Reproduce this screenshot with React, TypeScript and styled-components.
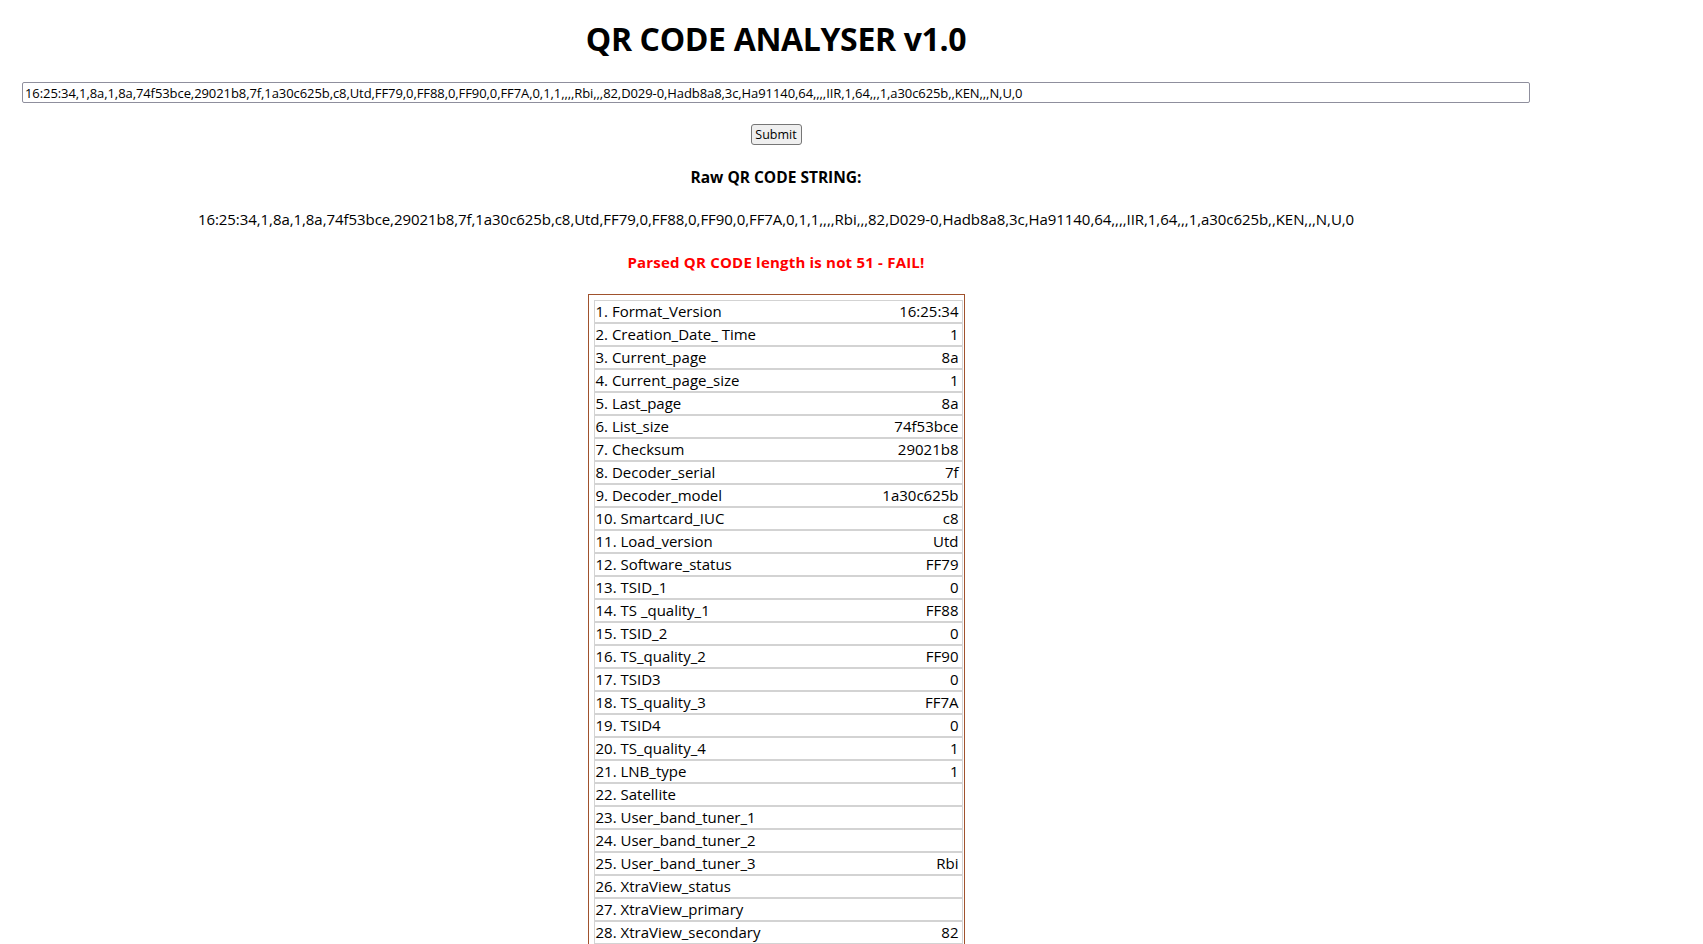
import React from 'react';
import styled, { createGlobalStyle } from 'styled-components';

const RAW =
  '16:25:34,1,8a,1,8a,74f53bce,29021b8,7f,1a30c625b,c8,Utd,FF79,0,FF88,0,FF90,0,FF7A,0,1,1,,,,Rbi,,,82,D029-0,Hadb8a8,3c,Ha91140,64,,,,IIR,1,64,,,1,a30c625b,,KEN,,,N,U,0';

const FIELDS = [
  'Format_Version',
  'Creation_Date_ Time',
  'Current_page',
  'Current_page_size',
  'Last_page',
  'List_size',
  'Checksum',
  'Decoder_serial',
  'Decoder_model',
  'Smartcard_IUC',
  'Load_version',
  'Software_status',
  'TSID_1',
  'TS _quality_1',
  'TSID_2',
  'TS_quality_2',
  'TSID3',
  'TS_quality_3',
  'TSID4',
  'TS_quality_4',
  'LNB_type',
  'Satellite',
  'User_band_tuner_1',
  'User_band_tuner_2',
  'User_band_tuner_3',
  'XtraView_status',
  'XtraView_primary',
  'XtraView_secondary',
  'Network_id',
  'Hard_disk_model',
  'Hard_disk_status',
  'Hard_disk_serial',
  'Hard_disk_size',
];

const GlobalStyle = createGlobalStyle`
  html, body {
    margin: 0;
    padding: 0;
    background: #ffffff;
    overflow: hidden;
  }
  body {
    font-family: 'Open Sans', 'Noto Sans', sans-serif;
    color: #000000;
  }
`;

const Page = styled.div`
  width: 1508px;
  margin-left: 22px;
  text-align: center;
`;

const Title = styled.h1`
  margin: 17px 0 0;
  font-size: 32px;
  line-height: 44px;
  font-weight: 700;
  letter-spacing: -0.35px;
`;

const Form = styled.form`
  display: flex;
  flex-direction: column;
  align-items: center;
  margin-top: 21px;
`;

const TextInput = styled.input`
  box-sizing: border-box;
  width: 100%;
  height: 21px;
  padding: 1px 2px;
  border: 1px solid #8f8f9d;
  border-radius: 2px;
  font-family: 'Open Sans', 'Noto Sans', sans-serif;
  font-size: 13px;
  letter-spacing: -0.08px;
  color: #000000;
  outline: none;
`;

const SubmitButton = styled.button`
  box-sizing: border-box;
  width: 51px;
  height: 21px;
  margin-top: 21px;
  padding: 0;
  background: #efefef;
  border: 1px solid #767676;
  border-radius: 3px;
  font-family: 'Open Sans', 'Noto Sans', sans-serif;
  font-size: 12.5px;
  color: #000000;
`;

const Heading = styled.div`
  margin-top: 21px;
  font-size: 15.5px;
  line-height: 22px;
  font-weight: 700;
`;

const RawLine = styled.div`
  margin-top: 20px;
  font-size: 15px;
  line-height: 22px;
  letter-spacing: -0.06px;
`;

const Verdict = styled.div<{ $ok: boolean }>`
  margin-top: 21px;
  font-size: 15px;
  line-height: 22px;
  font-weight: 700;
  letter-spacing: 0.2px;
  color: ${({ $ok }) => ($ok ? '#008000' : '#ff0000')};
`;

const ResultBox = styled.div`
  box-sizing: border-box;
  width: 377px;
  margin: 21px auto 0;
  padding: 5px 1px 5px 5px;
  border: 1px solid #a0522d;
  text-align: left;
`;

const Row = styled.div`
  display: flex;
  justify-content: space-between;
  align-items: center;
  height: 21px;
  padding: 0 3px 0 1px;
  border: 1px solid #d3d3d3;
  font-size: 15px;
  line-height: 21px;
  white-space: nowrap;
`;

const App = () => {
  const parts = RAW.split(',');
  const ok = parts.length === 51;

  return (
    <>
      <GlobalStyle />
      <Page>
        <Title>QR CODE ANALYSER v1.0</Title>
        <Form onSubmit={(e) => e.preventDefault()}>
          <TextInput type="text" defaultValue={RAW} />
          <SubmitButton type="submit">Submit</SubmitButton>
        </Form>
        <Heading>Raw QR CODE STRING:</Heading>
        <RawLine>{RAW}</RawLine>
        <Verdict $ok={ok}>
          {ok ? 'Parsed QR CODE length is 51 - PASS!' : 'Parsed QR CODE length is not 51 - FAIL!'}
        </Verdict>
        <ResultBox>
          {FIELDS.map((name, i) => (
            <Row key={name}>
              <span>
                {i + 1}. {name}
              </span>
              <span>{parts[i] ?? ''}</span>
            </Row>
          ))}
        </ResultBox>
      </Page>
    </>
  );
};

export default App;
